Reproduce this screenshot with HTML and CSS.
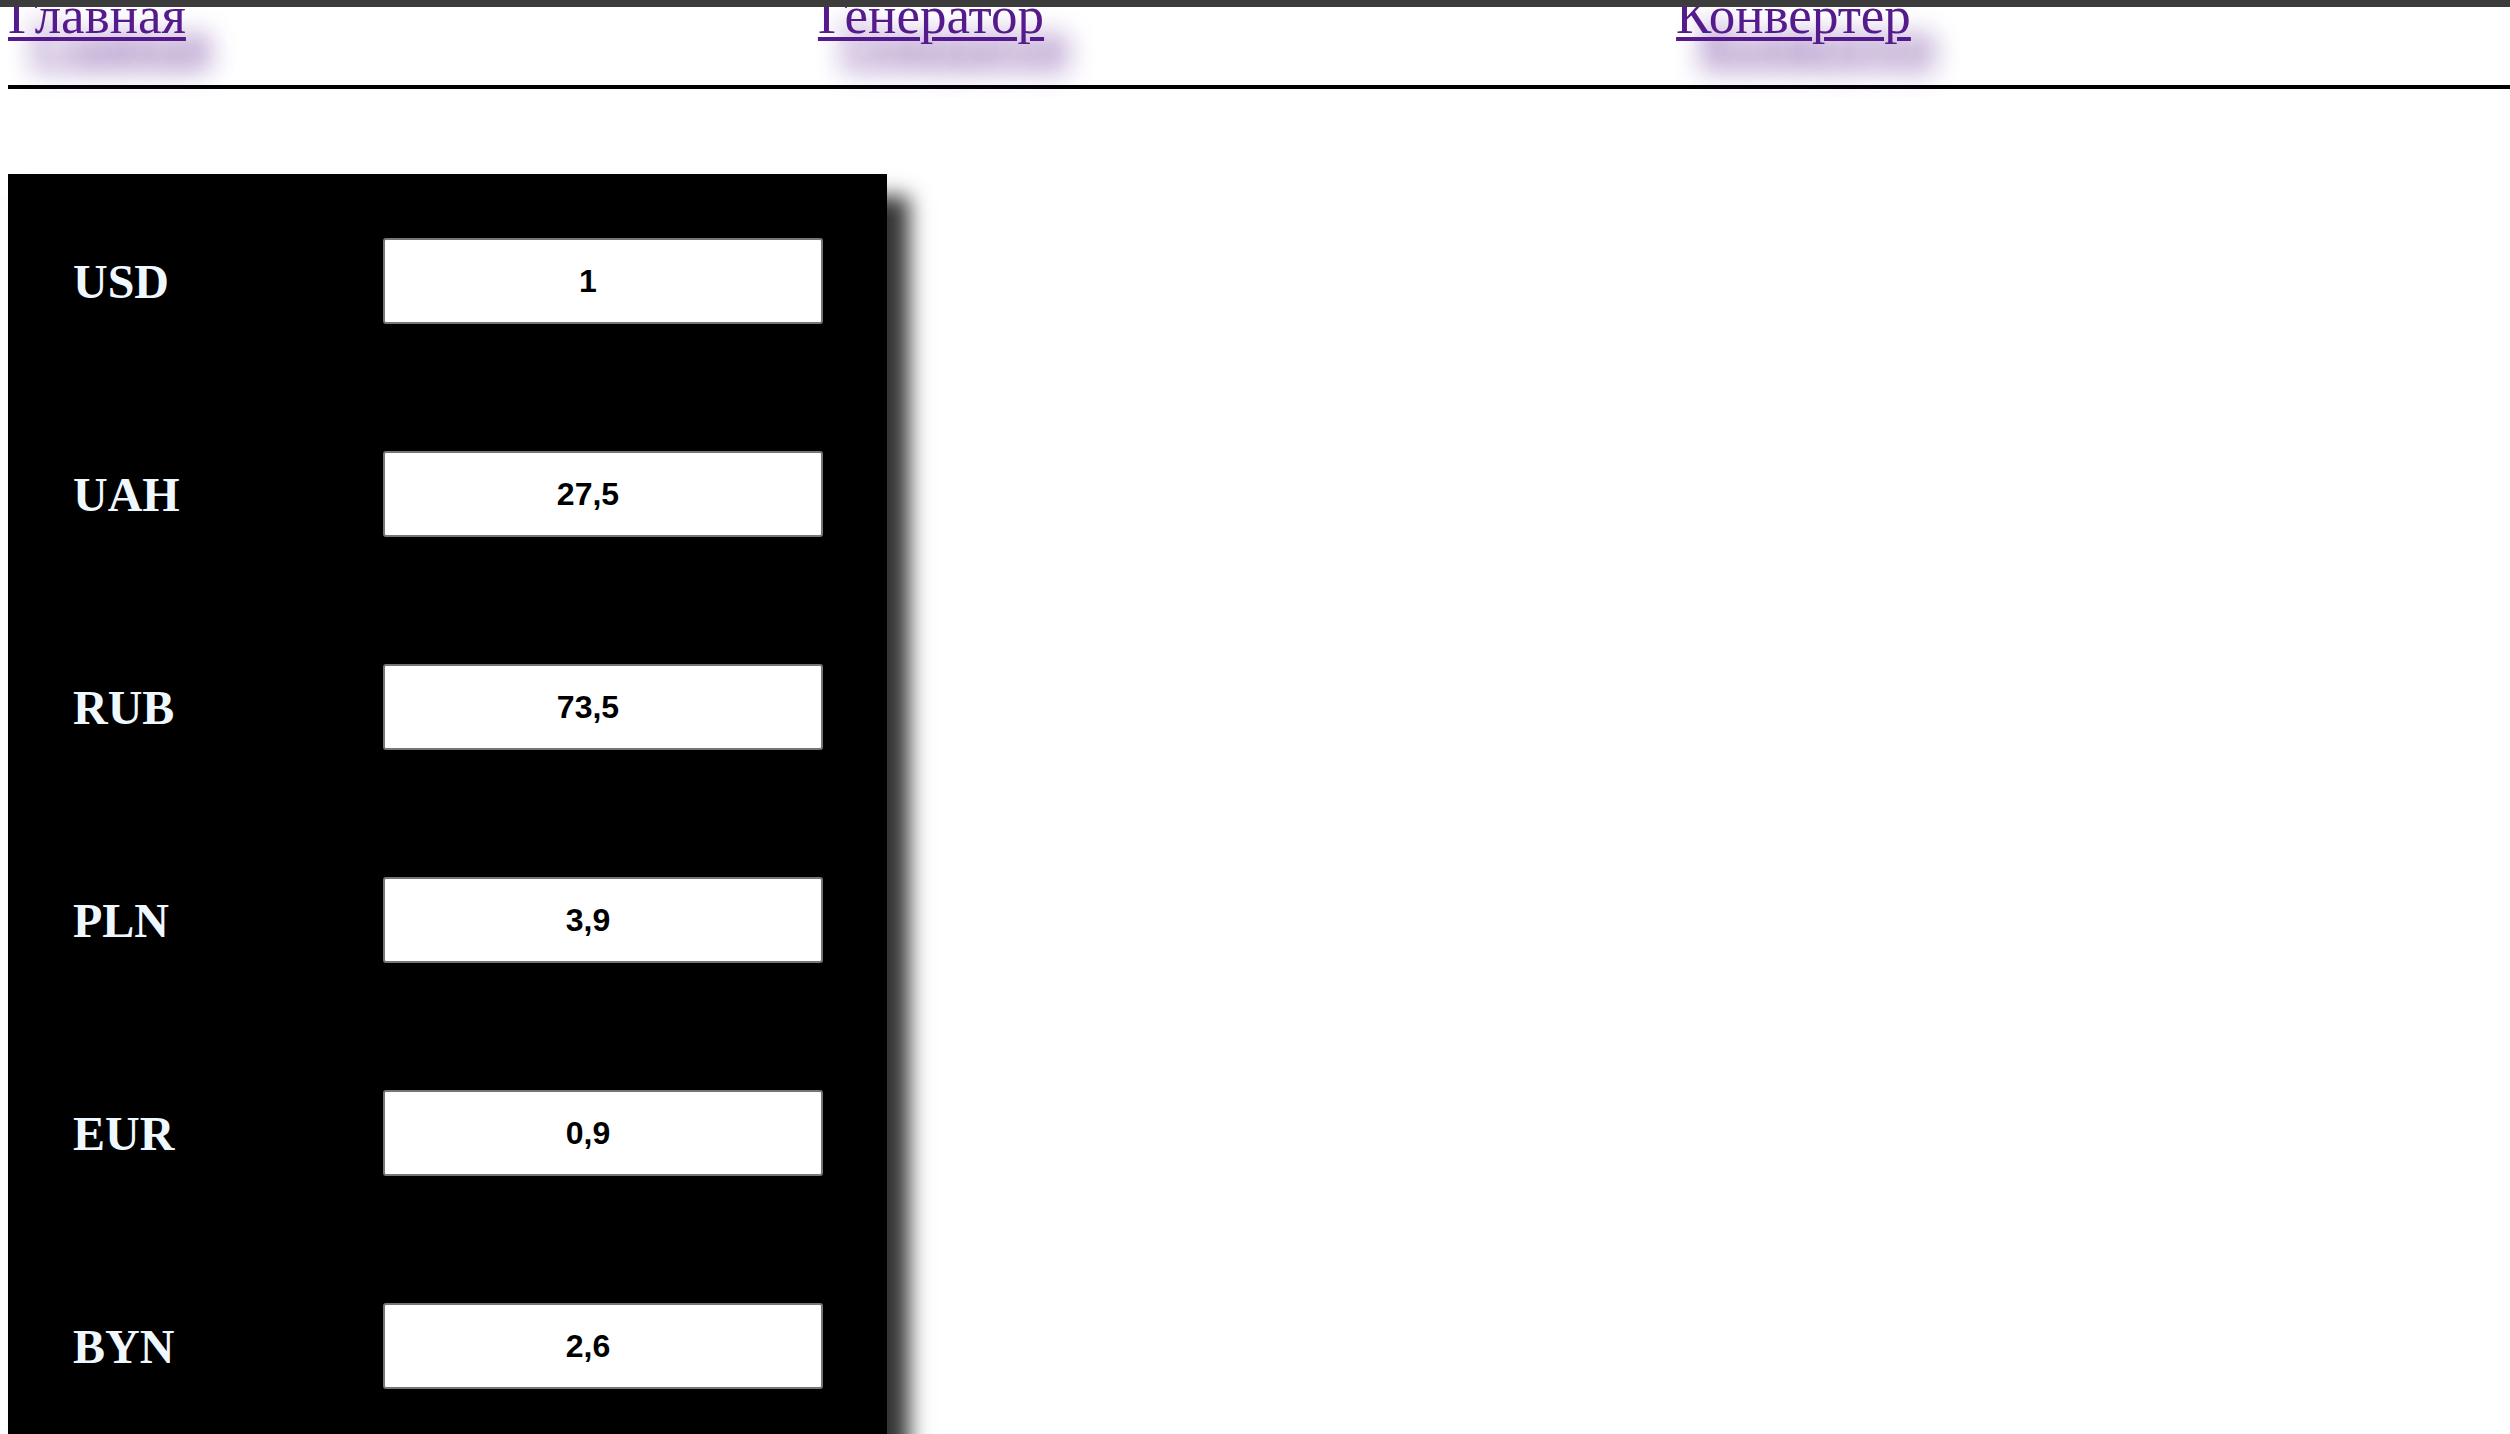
FILE: index.html
```html
<!DOCTYPE html>
<html lang="ru">
<head>
<meta charset="utf-8">
<title>Конвертер</title>
<link rel="stylesheet" href="styles.css">
</head>
<body>
<div class="topbar"></div>
<nav class="nav">
  <a class="nav-link" href="#">Главная</a>
  <a class="nav-link" href="#">Генератор</a>
  <a class="nav-link" href="#">Конвертер</a>
</nav>
<main class="panel">
  <label class="cur">USD</label><input class="val" type="text" value="1">
  <label class="cur">UAH</label><input class="val" type="text" value="27,5">
  <label class="cur">RUB</label><input class="val" type="text" value="73,5">
  <label class="cur">PLN</label><input class="val" type="text" value="3,9">
  <label class="cur">EUR</label><input class="val" type="text" value="0,9">
  <label class="cur">BYN</label><input class="val" type="text" value="2,6">
</main>
</body>
</html>
```
FILE: styles.css
```css
html, body {
  background: #ffffff;
}
body {
  margin: 0;
  padding: 0 8px;
  font-family: "Liberation Serif", "Times New Roman", serif;
}
.topbar {
  position: fixed;
  top: 0;
  left: 0;
  right: 0;
  height: 7px;
  background: #3c3c3c;
  z-index: 10;
}
.nav {
  display: flex;
  gap: 632px;
  margin-top: -15px;
  margin-right: -8px;
  padding-bottom: 39px;
  border-bottom: 4px solid #000;
  font-size: 53px;
  line-height: 61px;
}
.nav-link {
  color: #551a8b;
  text-decoration: underline;
  text-decoration-thickness: 4px;
  text-underline-offset: 4px;
  text-shadow: 24px 27px 26px rgba(85, 26, 139, 0.95);
}
.panel {
  margin-top: 85px;
  width: 749px;
  padding: 64px 65px 64px 65px;
  background: #000;
  box-shadow: 22px 22px 20px rgba(0, 0, 0, 0.8);
  display: grid;
  grid-template-columns: 310px 440px;
  row-gap: 127px;
  align-items: center;
}
.cur {
  color: #f0f8ff;
  font-family: "Liberation Serif", "Times New Roman", serif;
  font-weight: bold;
  font-size: 48px;
}
.val {
  box-sizing: border-box;
  width: 440px;
  height: 86px;
  margin: 0;
  padding: 0 31px 0 1px;
  border: 2px solid #767676;
  border-radius: 3px;
  background: #fff;
  color: #000;
  font-family: "Liberation Sans", Arial, sans-serif;
  font-weight: bold;
  font-size: 32px;
  text-align: center;
}
```
